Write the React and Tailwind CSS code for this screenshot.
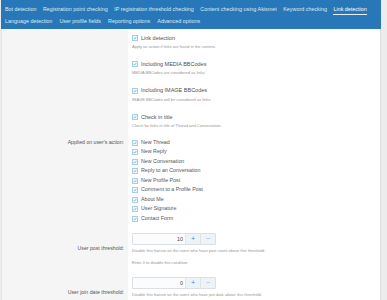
import React from "react";

const tabs1 = [
  "Bot detection",
  "Registration point checking",
  "IP registration threshold checking",
  "Content checking using Akismet",
  "Keyword checking",
  "Link detection",
];
const tabs2 = ["Language detection", "User profile fields", "Reporting options", "Advanced options"];

function Check() {
  return (
    <span className="inline-flex items-center justify-center w-[6px] h-[6px] border border-[#a6cdea] bg-[#f0f7fc] mr-[3px] shrink-0">
      <svg width="4" height="4" viewBox="0 0 4 4">
        <path d="M0.6 2 L1.6 3 L3.4 0.9" stroke="#5aa1d8" strokeWidth="0.7" fill="none" />
      </svg>
    </span>
  );
}

function CheckLine({ label }) {
  return (
    <div className="flex items-center h-[9.5px] text-[5.3px] text-[#555555]">
      <Check />
      <span>{label}</span>
    </div>
  );
}

function Option({ label, desc, last }) {
  return (
    <div className={last ? "" : "mb-[8.3px]"}>
      <div className="flex items-center h-[10px] text-[5.5px] text-[#505050]">
        <Check />
        <span>{label}</span>
      </div>
      <div className="h-[8px] flex items-center text-[4px] text-[#959595]">{desc}</div>
    </div>
  );
}

function NumBox({ value }) {
  return (
    <div className="flex h-[12px] w-[84px] border border-[#dcdfe3] rounded-[1px] bg-[#fbfcfd]">
      <div className="flex-1 flex items-center justify-end pr-[2px] text-[5.4px] text-[#4a4a4a]">{value}</div>
      <div className="w-[15px] flex items-center justify-center bg-[#eef3f8] border-l border-[#e2e7ec] text-[7px] text-[#3d8fd1]">+</div>
      <div className="w-[15px] flex items-center justify-center bg-[#eef3f8] border-l border-[#dde3e9] text-[7px] text-[#8fb6d8]">−</div>
    </div>
  );
}

export default function App() {
  return (
    <div className="w-[387px] h-[300px] overflow-hidden bg-[#ececec] font-['Liberation_Sans',Arial,sans-serif]">
      <div className="ml-[1px] w-[380px] h-full flex flex-col">
        <div className="h-[29px] bg-[#2878b9] pl-[4px] pt-[3px] text-[5.4px] text-[#dbe9f5]">
          <div className="flex items-center h-[12px] gap-[6.5px]">
            {tabs1.map((t, i) => (
              <span
                key={t}
                className={
                  i === tabs1.length - 1
                    ? "text-white border-b border-[#e8f2fb] pb-[1px] translate-y-[1px]"
                    : ""
                }
              >
                {t}
              </span>
            ))}
          </div>
          <div className="flex items-center h-[13px] gap-[7px]">
            {tabs2.map((t) => (
              <span key={t}>{t}</span>
            ))}
          </div>
        </div>
        <div className="flex-1 flex">
          <div className="w-[127px] bg-[#f5f5f5] border-l border-[#e4e4e4] shrink-0 flex flex-col items-end pr-[4px] text-[5.2px] text-[#555555]">
            <div className="h-[109.25px]" />
            <div className="h-[9.5px] flex items-center">Applied on user's action:</div>
            <div className="h-[94.75px]" />
            <div className="h-[12px] flex items-center">User post threshold:</div>
            <div className="h-[32px]" />
            <div className="h-[12px] flex items-center">User join date threshold:</div>
          </div>
          <div className="flex-1 bg-white border-r border-[#dedede] pl-[4px] pt-[4px]">
            <Option label="Link detection" desc="Apply an action if links are found in the content." />
            <Option label="Including MEDIA BBCodes" desc="MEDIA BBCodes are considered as links." />
            <Option label="Including IMAGE BBCodes" desc="IMAGE BBCodes will be considered as links." />
            <Option label="Check in title" desc="Check for links in title of Thread and Conversation." last />
            <div className="mt-[8.25px]">
              {[
                "New Thread",
                "New Reply",
                "New Conversation",
                "Reply to an Conversation",
                "New Profile Post",
                "Comment to a Profile Post",
                "About Me",
                "User Signature",
                "Contact Form",
              ].map((l) => (
                <CheckLine key={l} label={l} />
              ))}
            </div>
            <div className="mt-[9.25px]">
              <NumBox value="10" />
              <div className="mt-[2px] h-[8px] flex items-center text-[4px] text-[#959595]">
                Disable this feature on the users who have post count above this threshold.
              </div>
              <div className="mt-[4px] h-[8px] flex items-center text-[4px] text-[#959595]">
                Enter 0 to disable this condition
              </div>
            </div>
            <div className="mt-[10px]">
              <NumBox value="0" />
              <div className="mt-[2px] h-[8px] flex items-center text-[4px] text-[#959595]">
                Disable this feature on the users who have join date above this threshold.
              </div>
            </div>
          </div>
        </div>
      </div>
    </div>
  );
}
